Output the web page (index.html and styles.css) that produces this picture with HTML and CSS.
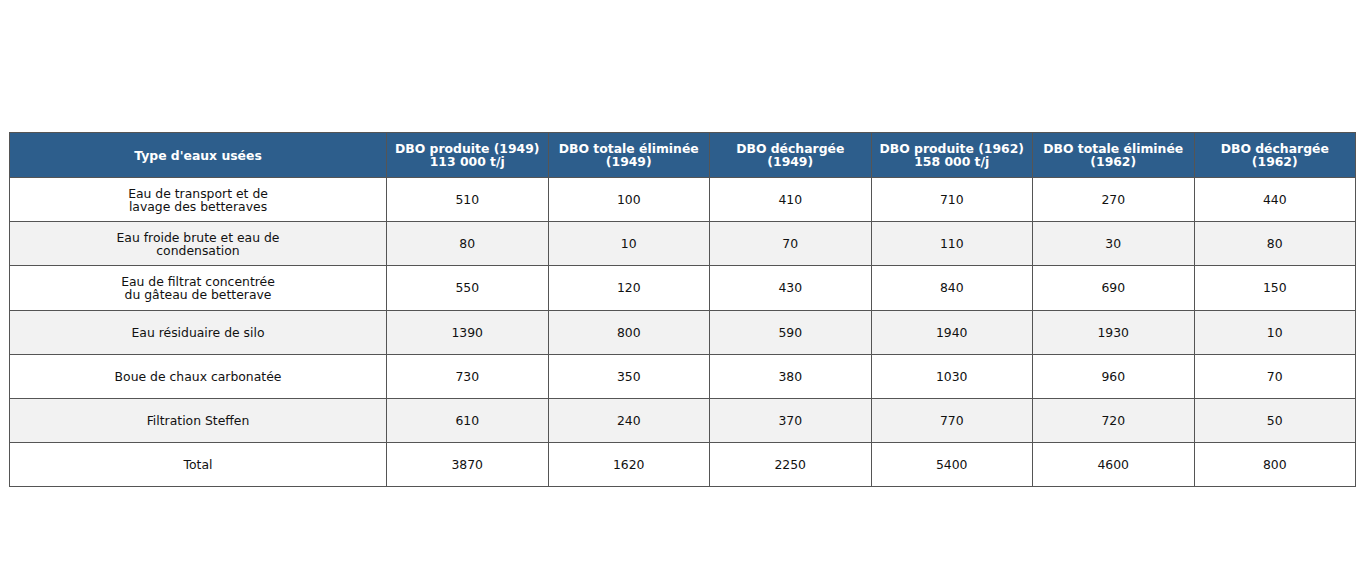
FILE: index.html
```html
<!DOCTYPE html>
<html lang="fr">
<head>
<meta charset="utf-8">
<title>DBO</title>
<link rel="stylesheet" href="styles.css">
</head>
<body>
<div class="page">
<table class="data">
<colgroup><col class="c-first"><col><col><col><col><col><col></colgroup>
<thead>
<tr>
<th>Type d'eaux usées</th>
<th>DBO produite (1949)<br>113 000 t/j</th>
<th>DBO totale éliminée<br>(1949)</th>
<th>DBO déchargée<br>(1949)</th>
<th>DBO produite (1962)<br>158 000 t/j</th>
<th>DBO totale éliminée<br>(1962)</th>
<th>DBO déchargée<br>(1962)</th>
</tr>
</thead>
<tbody>
<tr><td>Eau de transport et de<br>lavage des betteraves</td><td>510</td><td>100</td><td>410</td><td>710</td><td>270</td><td>440</td></tr>
<tr class="alt"><td>Eau froide brute et eau de<br>condensation</td><td>80</td><td>10</td><td>70</td><td>110</td><td>30</td><td>80</td></tr>
<tr><td>Eau de filtrat concentrée<br>du gâteau de betterave</td><td>550</td><td>120</td><td>430</td><td>840</td><td>690</td><td>150</td></tr>
<tr class="alt"><td>Eau résiduaire de silo</td><td>1390</td><td>800</td><td>590</td><td>1940</td><td>1930</td><td>10</td></tr>
<tr><td>Boue de chaux carbonatée</td><td>730</td><td>350</td><td>380</td><td>1030</td><td>960</td><td>70</td></tr>
<tr class="alt"><td>Filtration Steffen</td><td>610</td><td>240</td><td>370</td><td>770</td><td>720</td><td>50</td></tr>
<tr><td>Total</td><td>3870</td><td>1620</td><td>2250</td><td>5400</td><td>4600</td><td>800</td></tr>
</tbody>
</table>
</div>
</body>
</html>
```
FILE: styles.css
```css
html, body {
  margin: 0;
  padding: 0;
  background: #ffffff;
}
.page {
  padding: 132px 10px 0 9px;
}
.data {
  width: 1347px;
  border-collapse: collapse;
  table-layout: fixed;
  font-family: "DejaVu Sans", sans-serif;
  font-size: 12.4px;
  line-height: 13px;
  color: #111111;
}
.c-first {
  width: 377px;
}
.data th,
.data td {
  border: 1px solid #555555;
  text-align: center;
  vertical-align: middle;
  padding: 0 4px;
}
.data th {
  background: #2d5e8c;
  color: #ffffff;
  font-weight: bold;
  height: 44px;
}
.data td {
  height: 43.2px;
}
.data tr.alt td {
  background: #f2f2f2;
}
```
